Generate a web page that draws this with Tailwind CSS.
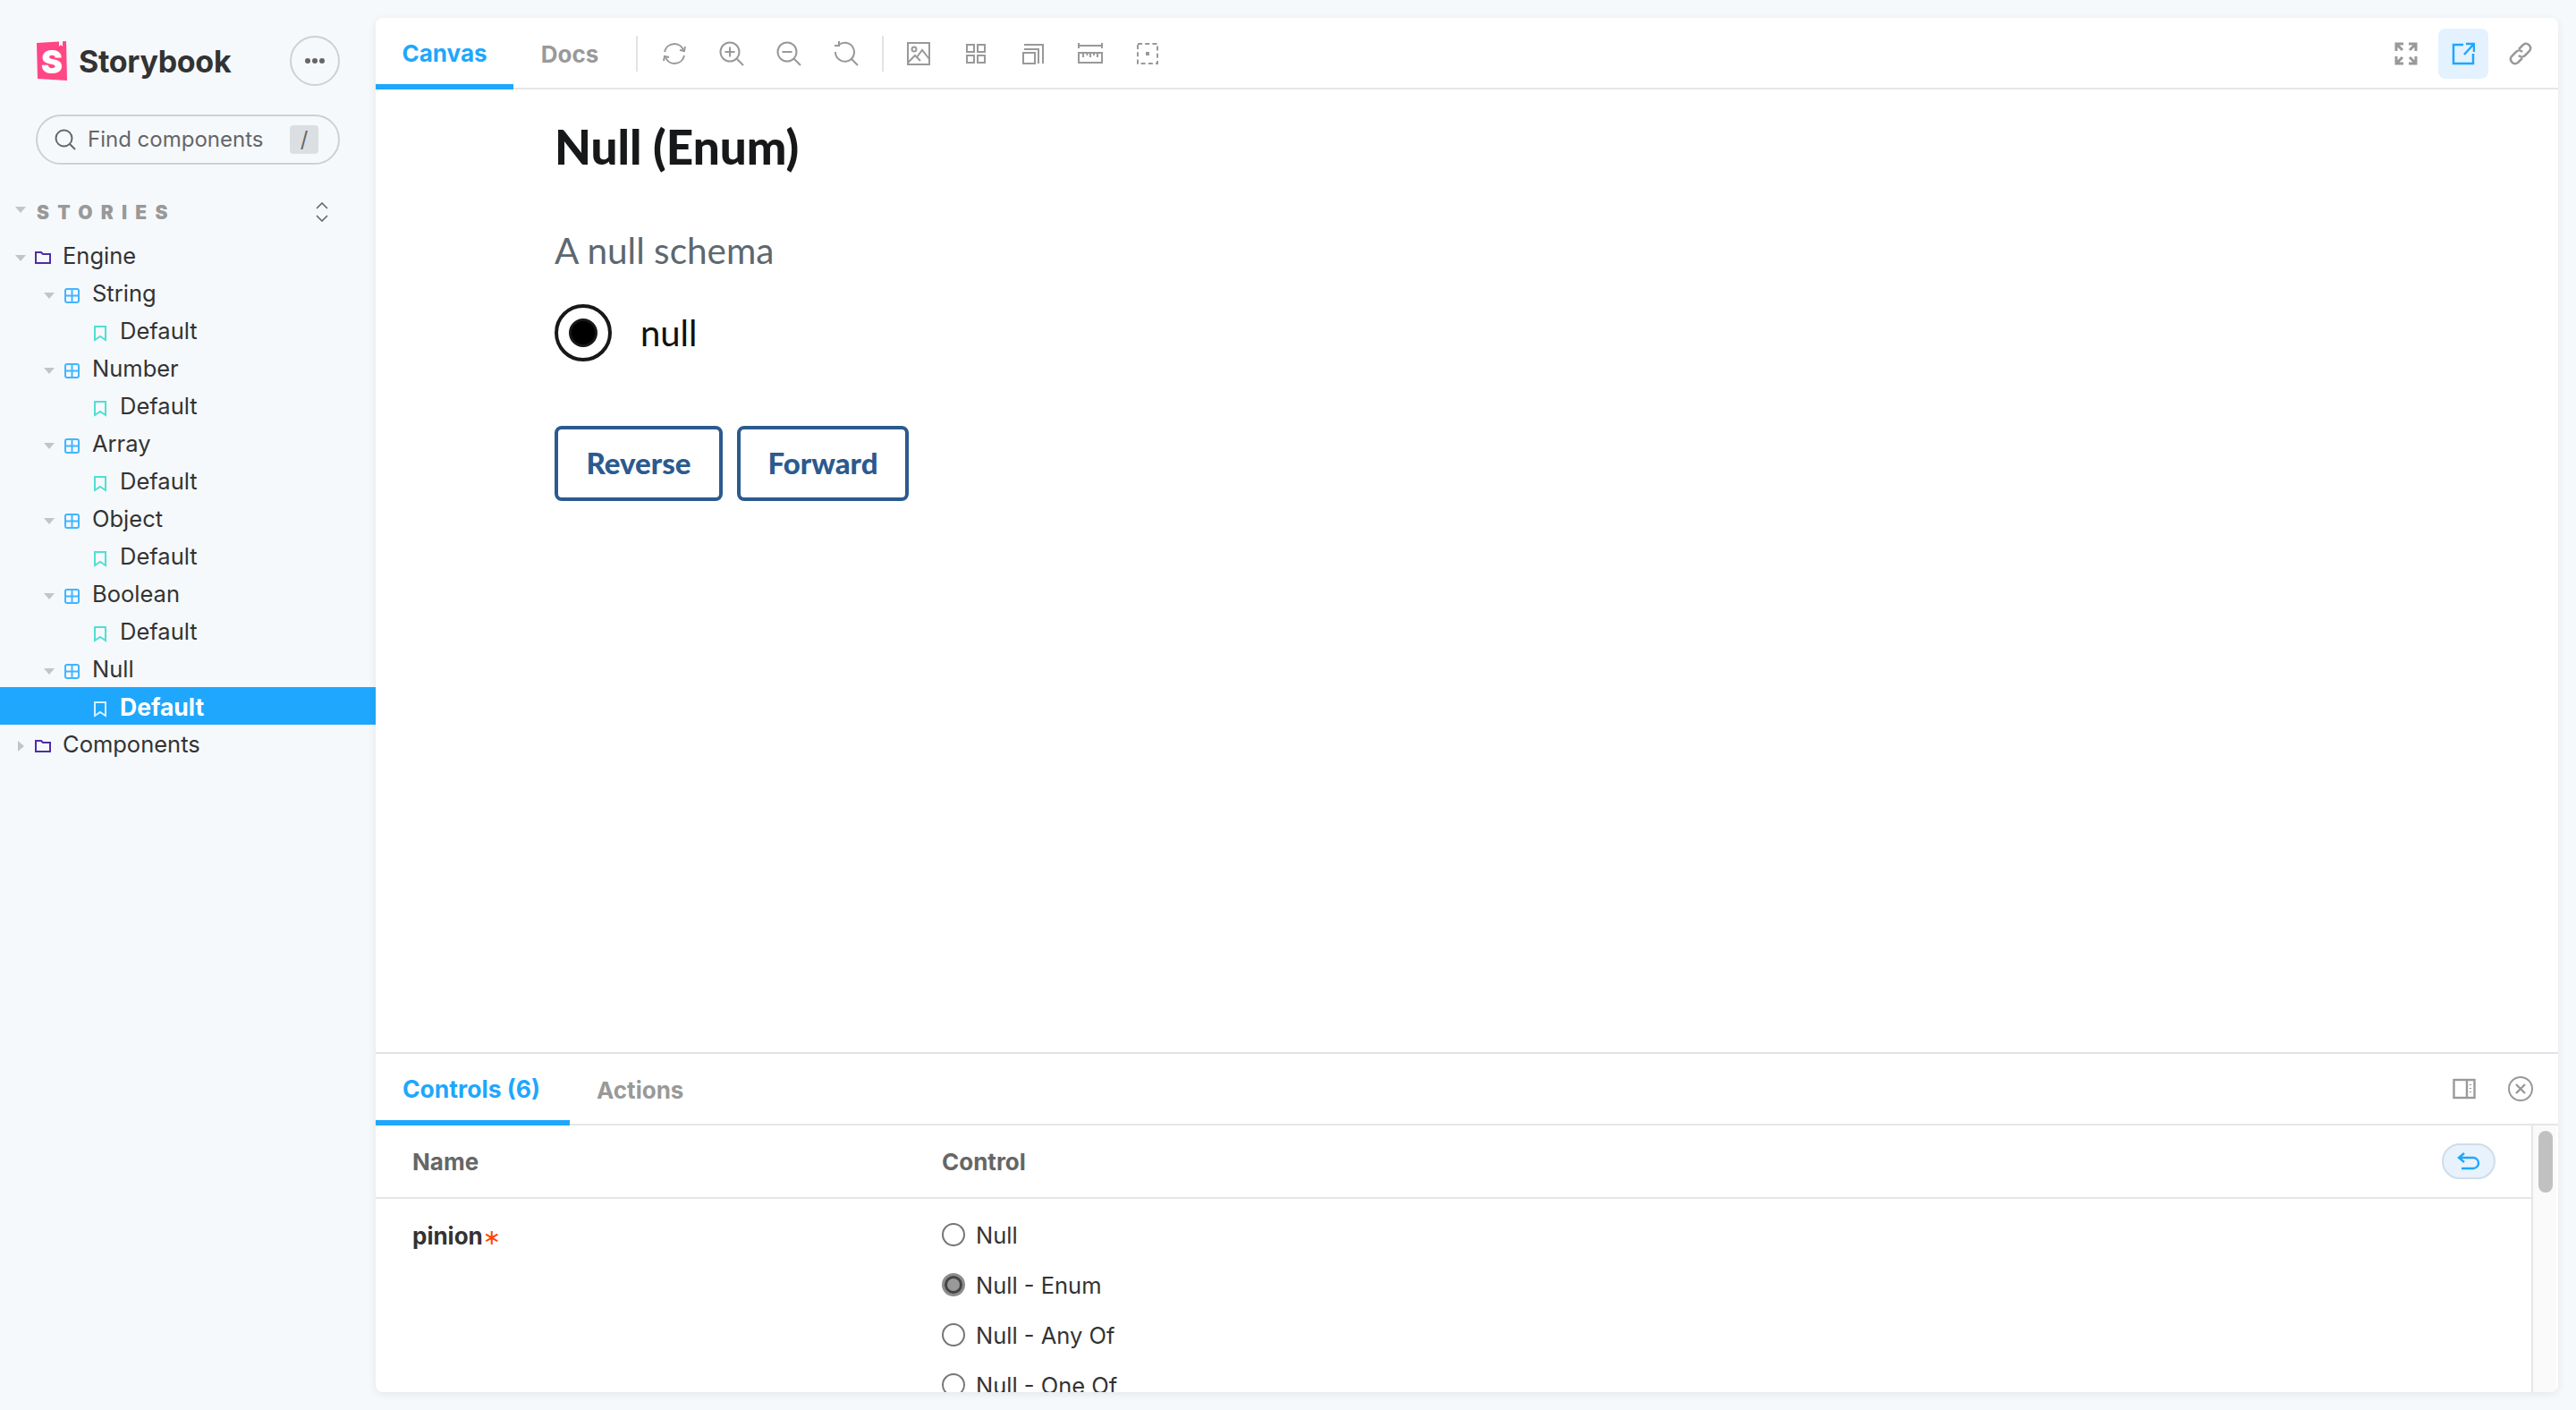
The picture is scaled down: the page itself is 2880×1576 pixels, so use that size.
<!doctype html>
<html><head><meta charset="utf-8"><script src="https://cdn.jsdelivr.net/npm/@tailwindcss/browser@4"></script></head>
<body class="m-0 w-[2880px] h-[1576px] overflow-hidden bg-[#f6f9fc] font-['Inter',sans-serif] text-[#333333]">
<div class="flex h-full">
<aside class="w-[420px] shrink-0 flex flex-col">
  <div class="h-[128px] pt-[40px] pl-[40px] pr-[40px] flex items-start justify-between">
    <div class="flex items-center gap-[12px] h-[56px]">
      <svg width="36" height="46" viewBox="0 0 36 46"><path d="M1 3 34 1 35 45 2 43Z" fill="#ff4785"/><path d="M26 1l0 6 2-2 2 2 0-6z" fill="#fff"/><text x="6" y="37" font-family="Inter" font-weight="900" font-size="36" fill="#fff">S</text></svg>
      <span class="text-[34px] leading-none font-bold tracking-[-0.3px] text-[#333333] pt-[1px]">Storybook</span>
    </div>
    <div class="w-[56px] h-[56px] rounded-full border-2 border-[#cfd0d1] flex items-center justify-center gap-[2px]">
      <span class="w-[6px] h-[6px] rounded-full bg-[#666666]"></span><span class="w-[6px] h-[6px] rounded-full bg-[#666666]"></span><span class="w-[6px] h-[6px] rounded-full bg-[#666666]"></span>
    </div>
  </div>
  <div class="mx-[40px] h-[56px] rounded-full border-2 border-[#cfd0d1] flex items-center pl-[19px] pr-[22px]">
    <svg width="24" height="24" viewBox="0 0 24 24" fill="none" stroke="#666" stroke-width="2"><circle cx="10.5" cy="10.5" r="9"/><path d="M17 17l6 6"/></svg>
    <span class="ml-[13px] text-[24px] leading-none text-[#666666]">Find components</span>
    <span class="ml-auto w-[32px] h-[32px] rounded-[4px] bg-[#dcdfe2] flex items-center justify-center text-[24px] leading-none text-[#666666]">/</span>
  </div>
  <div class="h-[80px] pt-[42px] flex items-start relative">
    <svg class="ml-[17px] mt-[5px]" width="12" height="7" viewBox="0 0 12 7"><path d="M0 0h12L6 7z" fill="#c4c4c4"/></svg>
    <span class="ml-[12px] text-[21px] leading-[24px] font-black tracking-[0.44em] text-[#999999]">STORIES</span>
    <svg class="absolute left-[353px] top-[42px]" width="14" height="22" viewBox="0 0 14 22" fill="none" stroke="#666" stroke-width="1.6"><path d="M1 7l6-6 6 6M1 15l6 6 6-6"/></svg>
  </div>
  <div class="text-[25.500px] leading-[42px] flex flex-col">
    <div class="h-[42px] flex items-center pl-[17px]"><svg class="mt-[6px]" width="12" height="7" viewBox="0 0 12 7"><path d="M0 0h12L6 7z" fill="#c4c4c4"/></svg><svg class="ml-[10px] mt-[5px]" width="18" height="14" viewBox="0 0 18 14" fill="none" stroke="#4e2ea5" stroke-width="2"><path d="M1 1h6l2 2h8v10H1z"/></svg><span class="ml-[13px] pt-[2px]">Engine</span></div>
    <div class="h-[42px] flex items-center pl-[49px]"><svg class="mt-[6px]" width="12" height="7" viewBox="0 0 12 7"><path d="M0 0h12L6 7z" fill="#c4c4c4"/></svg><svg class="ml-[11px] mt-[6px]" width="17" height="17" viewBox="0 0 17 17" fill="none" stroke="#43b5ff" stroke-width="2"><rect x="1" y="1" width="15" height="15" rx="2"/><path d="M8.5 1v15M1 8.5h15"/></svg><span class="ml-[14px] pt-[2px]">String</span></div>
    <div class="h-[42px] flex items-center pl-[105px]"><svg class="mt-[8px]" width="14" height="18" viewBox="0 0 14 18" fill="none" stroke="#4ee0d2" stroke-width="2"><path d="M1 1h12v15l-6-4-6 4z"/></svg><span class="ml-[15px] pt-[2px]">Default</span></div>
    <div class="h-[42px] flex items-center pl-[49px]"><svg class="mt-[6px]" width="12" height="7" viewBox="0 0 12 7"><path d="M0 0h12L6 7z" fill="#c4c4c4"/></svg><svg class="ml-[11px] mt-[6px]" width="17" height="17" viewBox="0 0 17 17" fill="none" stroke="#43b5ff" stroke-width="2"><rect x="1" y="1" width="15" height="15" rx="2"/><path d="M8.5 1v15M1 8.5h15"/></svg><span class="ml-[14px] pt-[2px]">Number</span></div>
    <div class="h-[42px] flex items-center pl-[105px]"><svg class="mt-[8px]" width="14" height="18" viewBox="0 0 14 18" fill="none" stroke="#4ee0d2" stroke-width="2"><path d="M1 1h12v15l-6-4-6 4z"/></svg><span class="ml-[15px] pt-[2px]">Default</span></div>
    <div class="h-[42px] flex items-center pl-[49px]"><svg class="mt-[6px]" width="12" height="7" viewBox="0 0 12 7"><path d="M0 0h12L6 7z" fill="#c4c4c4"/></svg><svg class="ml-[11px] mt-[6px]" width="17" height="17" viewBox="0 0 17 17" fill="none" stroke="#43b5ff" stroke-width="2"><rect x="1" y="1" width="15" height="15" rx="2"/><path d="M8.5 1v15M1 8.5h15"/></svg><span class="ml-[14px] pt-[2px]">Array</span></div>
    <div class="h-[42px] flex items-center pl-[105px]"><svg class="mt-[8px]" width="14" height="18" viewBox="0 0 14 18" fill="none" stroke="#4ee0d2" stroke-width="2"><path d="M1 1h12v15l-6-4-6 4z"/></svg><span class="ml-[15px] pt-[2px]">Default</span></div>
    <div class="h-[42px] flex items-center pl-[49px]"><svg class="mt-[6px]" width="12" height="7" viewBox="0 0 12 7"><path d="M0 0h12L6 7z" fill="#c4c4c4"/></svg><svg class="ml-[11px] mt-[6px]" width="17" height="17" viewBox="0 0 17 17" fill="none" stroke="#43b5ff" stroke-width="2"><rect x="1" y="1" width="15" height="15" rx="2"/><path d="M8.5 1v15M1 8.5h15"/></svg><span class="ml-[14px] pt-[2px]">Object</span></div>
    <div class="h-[42px] flex items-center pl-[105px]"><svg class="mt-[8px]" width="14" height="18" viewBox="0 0 14 18" fill="none" stroke="#4ee0d2" stroke-width="2"><path d="M1 1h12v15l-6-4-6 4z"/></svg><span class="ml-[15px] pt-[2px]">Default</span></div>
    <div class="h-[42px] flex items-center pl-[49px]"><svg class="mt-[6px]" width="12" height="7" viewBox="0 0 12 7"><path d="M0 0h12L6 7z" fill="#c4c4c4"/></svg><svg class="ml-[11px] mt-[6px]" width="17" height="17" viewBox="0 0 17 17" fill="none" stroke="#43b5ff" stroke-width="2"><rect x="1" y="1" width="15" height="15" rx="2"/><path d="M8.5 1v15M1 8.5h15"/></svg><span class="ml-[14px] pt-[2px]">Boolean</span></div>
    <div class="h-[42px] flex items-center pl-[105px]"><svg class="mt-[8px]" width="14" height="18" viewBox="0 0 14 18" fill="none" stroke="#4ee0d2" stroke-width="2"><path d="M1 1h12v15l-6-4-6 4z"/></svg><span class="ml-[15px] pt-[2px]">Default</span></div>
    <div class="h-[42px] flex items-center pl-[49px]"><svg class="mt-[6px]" width="12" height="7" viewBox="0 0 12 7"><path d="M0 0h12L6 7z" fill="#c4c4c4"/></svg><svg class="ml-[11px] mt-[6px]" width="17" height="17" viewBox="0 0 17 17" fill="none" stroke="#43b5ff" stroke-width="2"><rect x="1" y="1" width="15" height="15" rx="2"/><path d="M8.5 1v15M1 8.5h15"/></svg><span class="ml-[14px] pt-[2px]">Null</span></div>
    <div class="h-[42px] flex items-center pl-[105px] bg-[#1ea7fd] text-white font-bold text-[26.500px]"><svg class="mt-[8px]" width="14" height="18" viewBox="0 0 14 18" fill="none" stroke="#d6efff" stroke-width="2"><path d="M1 1h12v15l-6-4-6 4z"/></svg><span class="ml-[15px] pt-[2px]">Default</span></div>
    <div class="h-[42px] flex items-center pl-[20px]"><svg class="mt-[6px]" width="7" height="12" viewBox="0 0 7 12"><path d="M0 0v12l7-6z" fill="#c4c4c4"/></svg><svg class="ml-[12px] mt-[5px]" width="18" height="14" viewBox="0 0 18 14" fill="none" stroke="#4e2ea5" stroke-width="2"><path d="M1 1h6l2 2h8v10H1z"/></svg><span class="ml-[13px] pt-[2px]">Components</span></div>
  </div>
</aside>
<main class="w-[2440px] mt-[20px] h-[1536px] bg-white rounded-[8px] shadow-[0_2px_10px_rgba(0,0,0,0.08)] flex flex-col overflow-hidden">
  <div class="h-[80px] shrink-0 border-b-2 border-[#e6e6e6] flex items-stretch relative text-[#999999]">
    <div class="w-[154px] h-[80px] border-b-[6px] border-[#1ea7fd] text-[#1ea7fd] font-bold text-[26px] flex items-center justify-center pt-[5px]">Canvas</div>
    <div class="w-[126px] font-bold text-[26px] flex items-center justify-center pt-[2px]">Docs</div>
    <div class="w-[2px] h-[40px] mt-[20px] bg-[#e3e3e3] ml-[11px]"></div>
    <div class="flex items-center h-[80px] ml-[27px] gap-[36px]">
      <svg width="28" height="28" viewBox="0 0 28 28" fill="none" stroke="#999" stroke-width="2"><path d="M3 12A11 11 0 0 1 24 10M25 16A11 11 0 0 1 4 18"/><path d="M20 10l5 1 1-5M8 18l-5-1-1 5"/></svg>
      <svg width="28" height="28" viewBox="0 0 28 28" fill="none" stroke="#999" stroke-width="2"><circle cx="12" cy="12" r="10.5"/><path d="M19.5 19.5L27 27M12 6.5v11M6.5 12h11"/></svg>
      <svg width="28" height="28" viewBox="0 0 28 28" fill="none" stroke="#999" stroke-width="2"><circle cx="12" cy="12" r="10.5"/><path d="M19.5 19.5L27 27M6.5 12h11"/></svg>
      <svg width="28" height="28" viewBox="0 0 28 28" fill="none" stroke="#999" stroke-width="2"><path d="M6 4A10.5 10.5 0 1 1 2 12"/><path d="M19.5 19.5L27 27M6 0v5H1"/></svg>
    </div>
    <div class="w-[2px] h-[40px] mt-[20px] bg-[#e3e3e3] ml-[26px]"></div>
    <div class="flex items-center h-[80px] ml-[25px] gap-[36px]">
      <svg width="28" height="28" viewBox="0 0 28 28" fill="none" stroke="#999" stroke-width="2"><rect x="2" y="2" width="24" height="24"/><circle cx="9" cy="9" r="2.5"/><path d="M2 24l8-8 6 6M12 18l6-8 8 10"/></svg>
      <svg width="28" height="28" viewBox="0 0 28 28" fill="none" stroke="#999" stroke-width="2"><rect x="4" y="4" width="8" height="8"/><rect x="16" y="4" width="8" height="8"/><rect x="4" y="16" width="8" height="8"/><rect x="16" y="16" width="8" height="8"/></svg>
      <svg width="28" height="28" viewBox="0 0 28 28" fill="none" stroke="#999" stroke-width="2"><rect x="3" y="13" width="13" height="12"/><path d="M4 9h16v16M4 4h21v21"/></svg>
      <svg width="28" height="28" viewBox="0 0 28 28" fill="none" stroke="#999" stroke-width="2"><path d="M1 5h26M1 2v6M27 2v6"/><rect x="1" y="13" width="26" height="11"/><path d="M6 13v5M10.500 13v3M14 13v5M18 13v3M22 13v5"/></svg>
      <svg width="28" height="28" viewBox="0 0 28 28" fill="none" stroke="#999" stroke-width="2"><rect x="3" y="3" width="22" height="22" stroke-dasharray="5 3.200"/><path d="M13 13h2v2h-2z"/></svg>
    </div>
    <div class="ml-auto flex items-center h-[80px] pr-[14px] gap-0">
      <div class="w-[56px] h-[56px] rounded-[8px] flex items-center justify-center mr-[8px]"><svg width="26" height="26" viewBox="0 0 26 26" fill="none" stroke="#999" stroke-width="3"><path d="M2 10V2h8M2 2l7 7M16 2h8v8M24 2l-7 7M2 16v8h8M2 24l7-7M24 16v8h-8M24 24l-7-7"/></svg></div>
      <div class="w-[56px] h-[56px] rounded-[8px] bg-[#e3f2fe] flex items-center justify-center mr-[8px]"><svg width="26" height="26" viewBox="0 0 26 26" fill="none" stroke="#1ea7fd" stroke-width="2.500"><path d="M13 3H2v21h22V13M14 14L24 3M16 2h9v9"/></svg></div>
      <div class="w-[56px] h-[56px] rounded-[8px] flex items-center justify-center"><svg width="26" height="26" viewBox="0 0 26 26" fill="none" stroke="#999" stroke-width="2.500"><path d="M11 8l5-5a5 5 0 0 1 7 7l-5 5a5 5 0 0 1-7 0M15 18l-5 5a5 5 0 0 1-7-7l5-5a5 5 0 0 1 7 0"/></svg></div>
    </div>
  </div>
  <div class="h-[1076px] shrink-0 pl-[200px] font-['Lato',sans-serif]">
    <h1 class="m-0 pt-[36px] text-[53px] leading-[56px] font-black text-[#16181a]">Null (Enum)</h1>
    <p class="m-0 mt-[64px] text-[40.500px] leading-[48px] text-[#5c6870]">A null schema</p>
    <div class="mt-[36px] flex items-center h-[64px]">
      <span class="w-[64px] h-[64px] rounded-full border-[4px] border-[#16181a] flex items-center justify-center"><span class="w-[32px] h-[32px] rounded-full bg-black border-[3px] border-[#16181a]"></span></span>
      <span class="ml-[32px] text-[40px] text-[#111111]">null</span>
    </div>
    <div class="mt-[72px] flex gap-[16px]">
      <div class="w-[188px] h-[84px] rounded-[8px] border-[4px] border-[#2b5a8f] flex items-center justify-center text-[33px] font-black text-[#2b5a8f]">Reverse</div>
      <div class="w-[192px] h-[84px] rounded-[8px] border-[4px] border-[#2b5a8f] flex items-center justify-center text-[33px] font-black text-[#2b5a8f]">Forward</div>
    </div>
  </div>
  <div class="flex-1 min-h-0 border-t-2 border-[#dfe3e6] flex flex-col">
    <div class="h-[80px] shrink-0 border-b-2 border-[#e6e6e6] flex relative">
      <div class="w-[217px] h-[80px] border-b-[6px] border-[#1ea7fd] text-[#1ea7fd] font-bold text-[26.500px] flex items-center pl-[30px] pt-[6px]">Controls (6)</div>
      <div class="ml-[30px] h-[78px] flex items-center font-bold text-[26px] text-[#999999] pt-[2px]">Actions</div>
      <div class="ml-auto h-[78px] flex items-center pr-[28px]">
        <svg width="26" height="24" viewBox="0 0 26 24" fill="none" stroke="#999" stroke-width="2.400"><rect x="1.500" y="2" width="23" height="20"/><path d="M16 2v20M20 7v1M20 11v1M20 15v1"/></svg>
        <svg class="ml-[36px]" width="28" height="28" viewBox="0 0 28 28" fill="none" stroke="#999" stroke-width="2"><circle cx="14" cy="14" r="13"/><path d="M9 9l10 10M19 9L9 19" stroke-width="2.400"/></svg>
      </div>
    </div>
    <div class="flex-1 min-h-0 flex">
      <div class="flex-1 min-w-0 overflow-hidden">
        <div class="h-[82px] border-b-2 border-[#e6e6e6] flex items-center text-[26px] font-bold text-[#666666] relative">
          <span class="w-[633px] pl-[41px]">Name</span><span>Control</span>
          <div class="absolute right-[40px] top-[20px] w-[60px] h-[40px] rounded-full bg-[#e8f2fc] border-2 border-[#cfdde8] flex items-center justify-center"><svg width="26" height="20" viewBox="0 0 26 20" fill="none" stroke="#1ea7fd" stroke-width="2.400"><path d="M8 1L2 6l6 5M2 6h16a6 6 0 0 1 0 12H5"/></svg></div>
        </div>
        <div class="flex text-[25.500px]">
          <div class="w-[633px] pl-[41px] pt-[21px] leading-[42px] font-bold text-[26px]">pinion<span class="text-[#ff4400] font-normal font-['DejaVu_Sans',sans-serif] text-[24px] leading-none">∗</span></div>
          <div class="flex flex-col pt-[19px]">
            <div class="h-[56px] flex items-start"><span class="w-[26px] h-[26px] mt-[8px] rounded-full border-2 border-[#767676] bg-white"></span><span class="ml-[12px] leading-[42px] pt-[1px]">Null</span></div>
            <div class="h-[56px] flex items-start"><span class="w-[26px] h-[26px] mt-[8px] rounded-full border-[3px] border-[#8c8c8c] bg-[#999999] outline-[3px] -outline-offset-[6px] outline-[#444444]"></span><span class="ml-[12px] leading-[42px] pt-[1px]">Null - Enum</span></div>
            <div class="h-[56px] flex items-start"><span class="w-[26px] h-[26px] mt-[8px] rounded-full border-2 border-[#767676] bg-white"></span><span class="ml-[12px] leading-[42px] pt-[1px]">Null - Any Of</span></div>
            <div class="h-[56px] flex items-start"><span class="w-[26px] h-[26px] mt-[8px] rounded-full border-2 border-[#767676] bg-white"></span><span class="ml-[12px] leading-[42px] pt-[1px]">Null - One Of</span></div>
          </div>
        </div>
      </div>
      <div class="w-[28px] mr-[2px] shrink-0 bg-[#fafafa] border-l-2 border-[#e6e6e6] pt-[6px] pl-[6px]"><div class="w-[16px] h-[69px] rounded-full bg-[#c1c1c1]"></div></div>
    </div>
  </div>
</main>
</div>
</body></html>
